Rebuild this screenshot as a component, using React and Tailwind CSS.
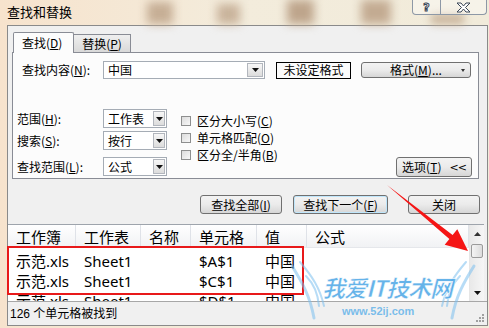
const cjk = "font-['Noto_Sans_CJK_SC','Noto_Sans',sans-serif]"

const Arrow = ({ className = '' }) => (
  <svg className={className} width="7" height="4" viewBox="0 0 7 4">
    <path d="M0 0h7L3.5 4z" fill="#111" />
  </svg>
)

const DropBtn = ({ className = '' }) => (
  <span className={`flex items-center justify-center border border-[#b2b6bd] bg-linear-to-b from-[#f7f7f7] to-[#dcdcdc] ${className}`}>
    <Arrow />
  </span>
)

const Select = ({ value }) => (
  <div className="flex h-[19px] w-[64px] items-center border border-[#a5acb5] bg-white pl-[4px] pr-[1px]">
    <span className="flex-1 text-[12px] leading-none">{value}</span>
    <DropBtn className="h-[15px] w-[12px]" />
  </div>
)

const Btn = ({ children, className = '' }) => (
  <div className={`flex items-center justify-center rounded-[3px] border border-[#707070] bg-linear-to-b from-[#f3f3f3] via-[#ebebeb] to-[#d6d6d6] text-[12px] leading-none ${className}`}>
    {children}
  </div>
)

const Check = ({ children }) => (
  <div className="flex h-[17px] items-center gap-[6px]">
    <span className="h-[10px] w-[10px] border border-[#8e8f8f] bg-linear-to-br from-[#dcdcdc] to-[#f8f8f8]" />
    <span className="text-[12px] leading-none">{children}</span>
  </div>
)

const cols = [
  { w: 'w-[68px]', label: '工作簿' },
  { w: 'w-[65px]', label: '工作表' },
  { w: 'w-[50px]', label: '名称' },
  { w: 'w-[66px]', label: '单元格' },
  { w: 'w-[50px]', label: '值' },
  { w: 'flex-1', label: '公式' },
]

const rows = [
  ['示范.xls', 'Sheet1', '', '$A$1', '中国', ''],
  ['示范.xls', 'Sheet1', '', '$C$1', '中国', ''],
  ['示范.xls', 'Sheet1', '', '$D$1', '中国', ''],
]

export default function App() {
  return (
    <div className={`relative h-[328px] w-[489px] overflow-hidden bg-linear-to-r from-[#f7e3cd] via-[#f3ecdc] to-[#f1ebda] text-black ${cjk}`}>
      {/* blurred sheet behind the glass title bar */}
      <div className="absolute left-[147px] top-[2px] h-[22px] w-[26px] bg-[#c6ae95] blur-[5px]" />
      <div className="absolute left-[217px] top-[4px] h-[20px] w-[23px] bg-[#c9b39b] blur-[5px]" />
      <div className="absolute left-[287px] top-0 h-[24px] w-[27px] bg-[#bea58c] blur-[5px]" />
      <div className="absolute left-[361px] top-0 h-[24px] w-[30px] bg-[#c3ab92] blur-[5px]" />
      <div className="absolute left-[431px] top-[14px] h-[10px] w-[33px] bg-[#c8b29a] blur-[4px]" />

      <div className="relative flex h-[25px] items-start">
        <span className="pl-[7px] pt-[5px] text-[13px] leading-none">查找和替换</span>
        <div className="ml-auto mr-[2px] flex h-[15px]">
          <div className="flex w-[29px] items-center justify-center rounded-bl-[4px] border border-t-0 border-[#8d98a6] bg-white/40">
            <span className="font-['DejaVu_Sans',sans-serif] text-[11px] font-bold leading-[13px] text-white [-webkit-text-stroke:1px_#3b4656]">?</span>
          </div>
          <div className="flex w-[46px] items-center justify-center rounded-br-[4px] border border-l-0 border-t-0 border-[#8d98a6] bg-white/40">
            <svg width="15" height="11" viewBox="0 0 15 11">
              <path d="M1 1h4l2.5 3 2.5-3h4l-4.5 4.5 4.5 4.5h-4l-2.5-3-2.5 3h-4l4.5-4.5z" fill="#fff" stroke="#3b4656" strokeWidth="1" />
            </svg>
          </div>
        </div>
      </div>

      <div className="ml-[7px] w-[481px] border border-[#8a8a8a] bg-[#f0f0f0]">
        {/* tabs */}
        <div className="relative z-10 -mb-px ml-[5px] mt-[6px] flex items-end">
          <div className="flex h-[21px] w-[61px] items-center rounded-t-[2px] border border-b-0 border-[#898c95] bg-[#fcfcfc] pl-[8px] text-[12px] leading-none">
            查找(<u>D</u>)
          </div>
          <div className="mb-px flex h-[18px] w-[57px] items-center justify-center border-r border-t border-[#898c95] bg-linear-to-b from-[#efefef] to-[#d9d9d9] text-[12px] leading-none">
            替换(<u>P</u>)
          </div>
        </div>

        {/* tab panel */}
        <div className="ml-[4px] h-[127px] w-[467px] border border-[#898c95] bg-[#fcfcfc]">
          <div className="mt-[8px] flex h-[18px] items-center">
            <span className="ml-[9px] w-[81px] text-[12px] leading-none">查找内容(<u>N</u>):</span>
            <div className="flex h-[18px] w-[162px] items-center border border-[#a5acb5] bg-white pl-[4px] pr-px">
              <span className="flex-1 text-[12px] leading-none">中国</span>
              <DropBtn className="h-[14px] w-[16px]" />
            </div>
            <div className="ml-[11px] flex h-[17px] w-[75px] items-center justify-center border border-black bg-[#fbfbfb] text-[12px] leading-none">
              未设定格式
            </div>
            <Btn className="relative ml-[10px] h-[16px] w-[110px]">
              格式(<u>M</u>)...
              <svg className="absolute right-[5px] top-[6px]" width="4" height="3" viewBox="0 0 4 3">
                <path d="M0 0h4L2 3z" fill="#333" />
              </svg>
            </Btn>
          </div>

          <div className="mt-[30px] flex h-[68px]">
            <div className="ml-[4px] flex flex-col">
              <div className="flex h-[19px] items-center">
                <span className="w-[86px] text-[12px] leading-none">范围(<u>H</u>):</span>
                <Select value="工作表" />
              </div>
              <div className="mt-[3px] flex h-[19px] items-center">
                <span className="w-[86px] text-[12px] leading-none">搜索(<u>S</u>):</span>
                <Select value="按行" />
              </div>
              <div className="mt-[7px] flex h-[19px] items-center">
                <span className="w-[86px] text-[12px] leading-none">查找范围(<u>L</u>):</span>
                <Select value="公式" />
              </div>
            </div>
            <div className="ml-[14px] flex flex-col pt-[3px]">
              <Check>区分大小写(<u>C</u>)</Check>
              <Check>单元格匹配(<u>O</u>)</Check>
              <Check>区分全/半角(<u>B</u>)</Check>
            </div>
            <Btn className="ml-auto mr-[6px] h-[20px] w-[76px] self-end gap-[8px]">
              <span>选项(<u>T</u>)</span>
              <span className="font-['DejaVu_Sans',sans-serif] text-[11px] tracking-[-1px]">&lt;&lt;</span>
            </Btn>
          </div>
        </div>

        {/* action buttons */}
        <div className="mt-[16px] flex h-[19px] justify-end pr-[7px]">
          <Btn className="w-[82px]">查找全部(<u>I</u>)</Btn>
          <Btn className="ml-[11px] w-[95px] border-[#3c7fb1] from-[#eaf6fd] via-[#d9f0fc] to-[#bee6fd] shadow-[inset_0_0_0_1px_#bfe6fb]">
            查找下一个(<u>F</u>)
          </Btn>
          <Btn className="ml-[20px] w-[72px]">关闭</Btn>
        </div>

        {/* results list */}
        <div className="mt-[10px] flex h-[77px] w-[476px] border-t border-[#9ea4ac] bg-white">
          <div className="h-[76px] w-[461px] overflow-hidden">
            <div className="flex h-[23px] border-b border-[#e5e7eb] bg-linear-to-b from-white to-[#f1f2f4]">
              {cols.map((c) => (
                <div key={c.label} className={`${c.w} flex items-center border-r border-[#dfe2e8] pl-[8px] text-[15px] leading-none`}>
                  {c.label}
                </div>
              ))}
            </div>
            <div className="pt-[3px]">
              {rows.map((r, i) => (
                <div key={i} className="flex h-[20px] items-center font-['Noto_Sans','Noto_Sans_CJK_SC',sans-serif] text-[15px] leading-none">
                  {r.map((v, j) => (
                    <div key={j} className={`${cols[j].w} pl-[8px]`}>{v}</div>
                  ))}
                </div>
              ))}
            </div>
          </div>
          <div className="flex w-[15px] flex-col border-l border-[#e6e6e6] bg-linear-to-r from-[#e9e9e9] to-[#f6f6f6]">
            <div className="flex h-[17px] items-center justify-center">
              <svg width="7" height="4" viewBox="0 0 7 4"><path d="M0 4h7L3.5 0z" fill="#333" /></svg>
            </div>
            <div className="mx-px mt-[2px] h-[14px] rounded-[2px] border border-[#9b9b9b] bg-linear-to-r from-[#f4f4f4] to-[#dcdcdc]" />
            <div className="flex-1" />
            <div className="flex h-[17px] items-center justify-center">
              <Arrow />
            </div>
          </div>
        </div>

        {/* status bar */}
        <div className="relative flex h-[24px] items-center border-t border-[#a7a7a7] bg-[#f0f0f0] pl-[2px]">
          <span className="font-['Liberation_Sans','Noto_Sans_CJK_SC',sans-serif] text-[12px] leading-none">126 个单元格被找到</span>
          <svg className="absolute bottom-[3px] right-[3px]" width="9" height="9" viewBox="0 0 9 9" fill="#a0a0a0">
            <rect x="7" y="1" width="2" height="2" /><rect x="4" y="4" width="2" height="2" /><rect x="7" y="4" width="2" height="2" />
            <rect x="1" y="7" width="2" height="2" /><rect x="4" y="7" width="2" height="2" /><rect x="7" y="7" width="2" height="2" />
          </svg>
        </div>
      </div>

      {/* red highlight around first results */}
      <div className="pointer-events-none absolute left-[7px] top-[246px] h-[49px] w-[297px] border-2 border-[#e8191a]" />

      {/* red arrow pointing at the scrollbar */}
      <svg className="pointer-events-none absolute left-0 top-0" width="489" height="328" viewBox="0 0 489 328">
        <polygon points="387,185 452.6,235.1 457.3,229.3 468,251 444.7,244.8 449.4,238.9" fill="#f51515" />
      </svg>

      {/* site watermark */}
      <svg className="pointer-events-none absolute left-0 top-0" width="489" height="328" viewBox="0 0 489 328" fill="none" stroke="#7cc0ee" strokeOpacity="0.55" strokeLinecap="round">
        <path d="M292 266c10 16 18 30 22 52" strokeWidth="3" />
        <path d="M300 262c12 14 20 26 24 44" strokeWidth="2" />
        <path d="M306 276c8 8 12 18 13 30" strokeWidth="2" />
        <path d="M474 266c-10 16-18 30-22 52" strokeWidth="3" />
        <path d="M466 262c-12 14-20 26-24 44" strokeWidth="2" />
        <path d="M460 276c-8 8-12 18-13 30" strokeWidth="2" />
      </svg>
      <div className="pointer-events-none absolute left-[322px] top-[276px] text-[23px] font-bold italic leading-none tracking-[-1px] text-[#4aa5e6]/85 [-webkit-text-stroke:0.5px_#ffffff]">
        我爱IT技术网
      </div>
      <div className="pointer-events-none absolute left-[342px] top-[306px] font-['Liberation_Sans',sans-serif] text-[11px] font-bold leading-none text-[#59afe9]/80">
        www.52ij.com
      </div>
    </div>
  )
}
